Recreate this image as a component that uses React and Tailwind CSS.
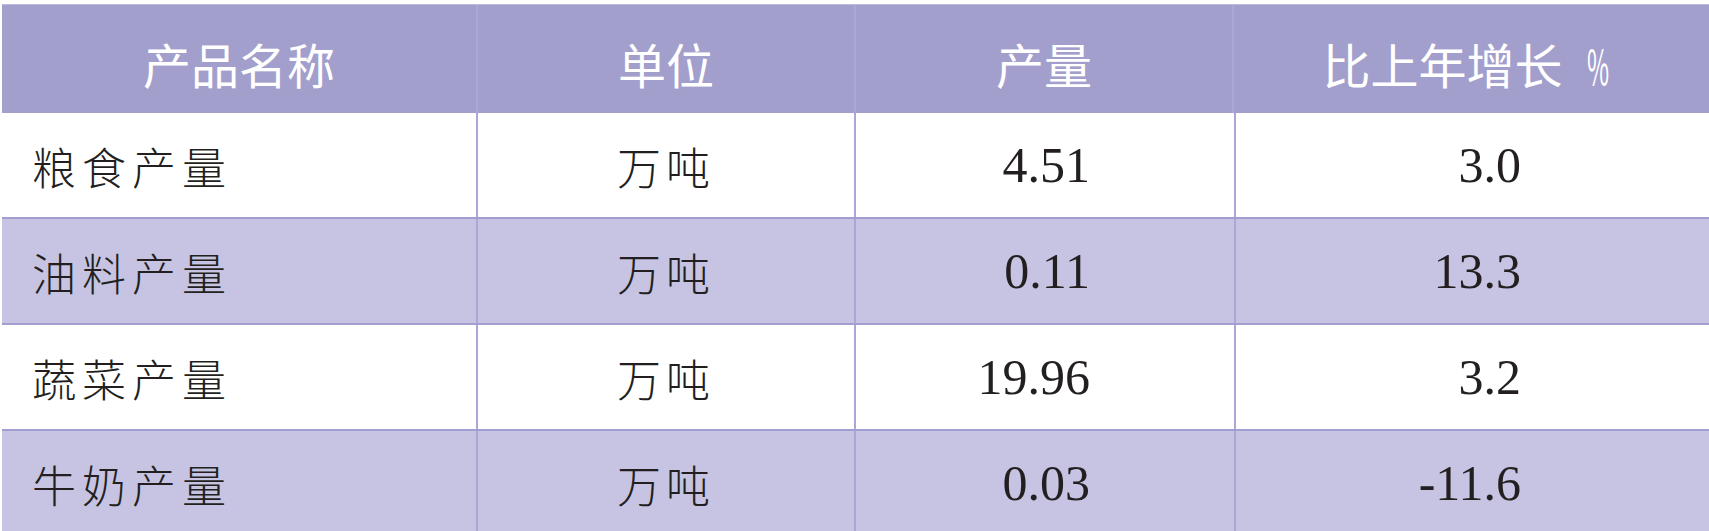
import React from 'react';

const rows = [
    { name: '粮食产量', unit: '万吨', amount: '4.51', growth: '3.0' },
    { name: '油料产量', unit: '万吨', amount: '0.11', growth: '13.3' },
    { name: '蔬菜产量', unit: '万吨', amount: '19.96', growth: '3.2' },
    { name: '牛奶产量', unit: '万吨', amount: '0.03', growth: '-11.6' },
];

const cjk = { fontFamily: '"Noto Sans CJK SC", "Noto Sans", sans-serif' };
const num = { fontFamily: '"Liberation Serif", "Times New Roman", serif' };

function App() {
    return (
        <div className="w-[1709px] h-[531px] overflow-hidden bg-white pt-[4px] pl-[2px]">
            {/* Header */}
            <div
                className="flex h-[109px] bg-[#a39fcd] border-t border-[#bcb8de] text-white text-[48px] leading-none"
                style={cjk}
            >
                <div className="w-[476px] shrink-0 flex items-center justify-center pt-[8px] border-r-2 border-[#aca8d6]">
                    产品名称
                </div>
                <div className="w-[378px] shrink-0 flex items-center justify-center pt-[8px] border-r-2 border-[#aca8d6]">
                    单位
                </div>
                <div className="w-[378px] shrink-0 flex items-center justify-center pt-[8px] border-r-2 border-[#aca8d6]">
                    产量
                </div>
                <div className="flex-1 flex items-center justify-center pt-[8px] pr-[10px]">
                    比上年增长
                    <span className="inline-block ml-[24px] w-[24px] text-[48px] scale-x-50 origin-left pt-[2px]">%</span>
                </div>
            </div>

            {/* Body */}
            {rows.map((r, i) => (
                <div
                    key={r.name}
                    className={
                        'flex h-[106px] border-b-2 border-[#a29ed0] text-[#231f20] ' +
                        (i % 2 === 1 ? 'bg-[#c6c4e2]' : 'bg-white')
                    }
                >
                    <div
                        className="w-[476px] shrink-0 flex items-center pl-[30px] pt-[2px] text-[44px] tracking-[6px] font-light border-r-2 border-[#aaa6d8]"
                        style={cjk}
                    >
                        {r.name}
                    </div>
                    <div
                        className="w-[378px] shrink-0 flex items-center justify-center pt-[2px] text-[44px] tracking-[5px] font-light border-r-2 border-[#aaa6d8]"
                        style={cjk}
                    >
                        {r.unit}
                    </div>
                    <div
                        className="w-[378px] shrink-0 flex items-center justify-end pr-[144px] text-[50px]"
                        style={num}
                    >
                        {r.amount}
                    </div>
                    <div
                        className="flex-1 flex items-center justify-end pr-[188px] text-[50px] border-l-2 border-[#aaa6d8]"
                        style={num}
                    >
                        {r.growth}
                    </div>
                </div>
            ))}
        </div>
    );
}

export default App;
